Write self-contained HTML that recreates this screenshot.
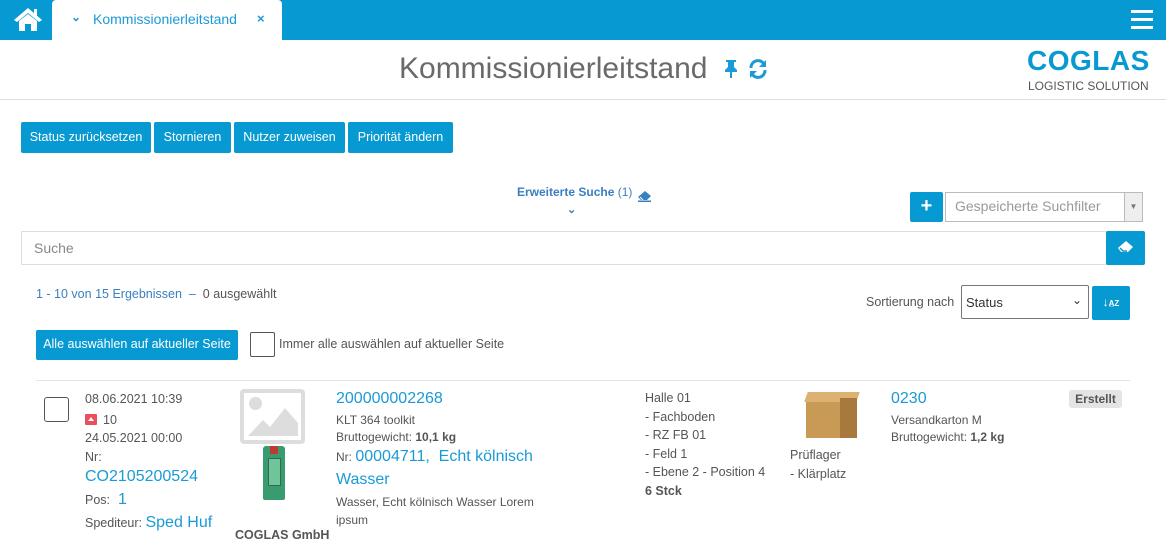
<!DOCTYPE html>
<html><head><meta charset="utf-8"><style>
*{box-sizing:border-box;margin:0;padding:0}
body{width:1166px;height:553px;overflow:hidden;background:#fff;font-family:"Liberation Sans",sans-serif;color:#555;position:relative}
.a{position:absolute}
.blue{color:#1a9ad6}
.btn{position:absolute;background:#079ad2;color:#fff;font-size:12.5px;border-radius:2px;text-align:center;line-height:30px;height:31px}
.t13{font-size:12.5px}
</style></head><body>
<div class="a" style="left:0;top:0;width:1166px;height:40px;background:#079ad2"></div>
<svg class="a" style="left:13px;top:6px" width="30" height="26" viewBox="0 0 30 26"><path d="M15 2 L1 14 L4 16 L15 7 L26 16 L29 14 Z" fill="#fff"/><path d="M6 15 L15 8 L24 15 V25 H18 V18 H12 V25 H6 Z" fill="#fff"/><rect x="21" y="3" width="3" height="7" fill="#fff"/></svg>
<div class="a" style="left:52px;top:0;width:230px;height:40px;background:#fff;border-radius:4px 4px 0 0"></div>
<div class="a blue" style="left:71px;top:10px;font-size:12px;font-weight:bold">&#8964;</div>
<div class="a blue" style="left:93px;top:11px;font-size:14px">Kommissionierleitstand</div>
<div class="a blue" style="left:257px;top:11px;font-size:13px;font-weight:bold">×</div>
<div class="a" style="left:1131px;top:10px;width:22px;height:3px;background:#fff;box-shadow:0 8px 0 #fff,0 16px 0 #fff"></div>
<div class="a" style="left:399px;top:52px;font-size:30px;color:#6a6a6a;font-weight:300">Kommissionierleitstand</div>
<svg class="a" style="left:723px;top:59px" width="16" height="20" viewBox="0 0 16 20"><path d="M3 1H13V3H11V8L14 11V13H9V19H7V13H2V11L5 8V3H3Z" fill="#1a9ad6"/></svg>
<svg class="a" style="left:748px;top:59px" width="20" height="20" viewBox="0 0 20 20"><path d="M3 9A7 7 0 0 1 16 5" stroke="#1a9ad6" stroke-width="3" fill="none"/><path d="M18 1V8H11Z" fill="#1a9ad6"/><path d="M17 11A7 7 0 0 1 4 15" stroke="#1a9ad6" stroke-width="3" fill="none"/><path d="M2 19V12H9Z" fill="#1a9ad6"/></svg>
<div class="a" style="left:1027px;top:45px;font-size:28px;font-weight:bold;color:#079ad2;letter-spacing:0.5px">COGLAS</div>
<div class="a" style="left:1028px;top:79px;font-size:12px;color:#555">LOGISTIC SOLUTION</div>
<div class="a" style="left:0;top:99px;width:1166px;height:1px;background:#ddd"></div>
<div class="btn" style="left:21px;top:122px;width:130px">Status zurücksetzen</div>
<div class="btn" style="left:154px;top:122px;width:77px">Stornieren</div>
<div class="btn" style="left:234px;top:122px;width:111px">Nutzer zuweisen</div>
<div class="btn" style="left:348px;top:122px;width:105px">Priorität ändern</div>
<div class="a" style="left:517px;top:185px;font-size:12px;font-weight:bold;color:#3a7fc0">Erweiterte Suche <span style="font-weight:normal">(1)</span></div>
<svg class="a" style="left:638px;top:191px" width="13" height="11" viewBox="0 0 13 11"><path d="M7 0L13 5L9 9H3L0 6Z" fill="#3a7fc0"/><path d="M2 6L5 9" stroke="#fff"/><rect x="0" y="9.5" width="13" height="1.5" fill="#3a7fc0"/></svg>
<div class="a" style="left:567px;top:203px;font-size:11px;color:#3a7fc0;font-weight:bold">&#8964;</div>
<div class="btn" style="left:910px;top:192px;width:33px;height:30px;font-size:20px;line-height:29px;font-weight:bold">+</div>
<div class="a" style="left:945px;top:192px;width:198px;height:30px;border:1px solid #bbb"></div>
<div class="a" style="left:1124px;top:193px;width:18px;height:28px;background:#eee;border-left:1px solid #bbb;font-size:8px;color:#777;text-align:center;line-height:28px">▼</div>
<div class="a" style="left:955px;top:198px;font-size:14px;color:#999">Gespeicherte Suchfilter</div>
<div class="a" style="left:21px;top:231px;width:1086px;height:34px;border:1px solid #ddd"></div>
<div class="a" style="left:34px;top:240px;font-size:14px;color:#888">Suche</div>
<div class="btn" style="left:1106px;top:231px;width:39px;height:34px"></div>
<svg class="a" style="left:1118px;top:241px" width="15" height="13" viewBox="0 0 15 13"><path d="M8 0L15 6L10 11H3L0 7Z" fill="#fff"/><path d="M2 7L5 10H9" stroke="#079ad2" stroke-width="1.5" fill="none"/></svg>
<div class="a" style="left:36px;top:287px;font-size:12.5px;color:#3a7fc0">1 - 10 von 15 Ergebnissen &nbsp;– &nbsp;<span style="color:#555">0 ausgewählt</span></div>
<div class="a" style="left:866px;top:295px;font-size:12.5px">Sortierung nach</div>
<div class="a" style="left:961px;top:285px;width:128px;height:34px;border:1px solid #777;border-radius:2px;font-size:13px;color:#333;padding:9px 0 0 4px">Status<span style="position:absolute;right:6px;top:7px;font-size:12px">&#8964;</span></div>
<div class="btn" style="left:1092px;top:286px;width:38px;height:34px;font-size:12px;font-weight:bold;line-height:33px">↓<span style="font-size:8px">A̲Z</span></div>
<div class="btn" style="left:36px;top:330px;width:202px;height:30px;line-height:29px">Alle auswählen auf aktueller Seite</div>
<div class="a" style="left:250px;top:332px;width:25px;height:25px;border:1px solid #555;border-radius:2px"></div>
<div class="a" style="left:279px;top:337px;font-size:12.5px">Immer alle auswählen auf aktueller Seite</div>
<div class="a" style="left:36px;top:380px;width:1094px;height:1px;background:#e5e5e5"></div>
<div class="a" style="left:44px;top:397px;width:25px;height:25px;border:1px solid #555;border-radius:3px"></div>
<div class="a t13" style="left:85px;top:390px;line-height:18px">08.06.2021 10:39</div>
<div class="a" style="left:85px;top:414px;width:12px;height:11px;background:#e8505b;border-radius:1px"></div>
<div class="a" style="left:88px;top:417px;width:0;height:0;border-left:3px solid transparent;border-right:3px solid transparent;border-bottom:4px solid #fff"></div>
<div class="a t13" style="left:103px;top:411px;line-height:18px">10</div>
<div class="a t13" style="left:85px;top:429px;line-height:18px">24.05.2021 00:00</div>
<div class="a t13" style="left:85px;top:448px;line-height:18px">Nr:</div>
<div class="a blue" style="left:85px;top:467px;font-size:16px;line-height:20px">CO2105200524</div>
<div class="a t13" style="left:85px;top:491px;line-height:18px">Pos: <span class="blue" style="font-size:16px">&nbsp;1</span></div>
<div class="a t13" style="left:85px;top:514px;line-height:18px">Spediteur: <span class="blue" style="font-size:16px">Sped Huf</span></div>
<div class="a" style="left:240px;top:389px;width:65px;height:55px;border:4px solid #ddd;border-radius:4px"></div>
<div class="a" style="left:249px;top:397px;width:13px;height:13px;border-radius:50%;background:#ddd"></div>
<svg class="a" style="left:248px;top:400px" width="50" height="36"><path d="M0 36L15 20L22 27L37 8L50 23V36Z" fill="#ddd"/></svg>
<div class="a" style="left:263px;top:446px;width:22px;height:54px;background:#3a9a70;border-radius:3px 3px 2px 2px"></div>
<div class="a" style="left:268px;top:458px;width:13px;height:28px;background:#6fc49a;border:1px solid #2d6e50"></div>
<div class="a" style="left:270px;top:446px;width:8px;height:8px;background:#c03a30"></div>
<div class="a" style="left:235px;top:528px;font-size:12.5px;font-weight:bold;color:#555">COGLAS GmbH</div>
<div class="a blue" style="left:336px;top:390px;font-size:16px">200000002268</div>
<div class="a" style="left:336px;top:413px;font-size:12px">KLT 364 toolkit</div>
<div class="a" style="left:336px;top:430px;font-size:12px">Bruttogewicht: <b>10,1 kg</b></div>
<div class="a" style="left:336px;top:448px;font-size:12px">Nr: <span class="blue" style="font-size:16px">00004711, &nbsp;Echt kölnisch</span></div>
<div class="a blue" style="left:336px;top:471px;font-size:16px">Wasser</div>
<div class="a" style="left:336px;top:493px;font-size:12px;line-height:18px;width:210px">Wasser, Echt kölnisch Wasser Lorem ipsum</div>
<div class="a t13" style="left:645px;top:389px;line-height:18.5px">Halle 01<br>- Fachboden<br>- RZ FB 01<br>- Feld 1<br>- Ebene 2 - Position 4<br><b>6 Stck</b></div>
<div class="a" style="left:806px;top:396px;width:46px;height:42px;background:#c89a55"></div>
<div class="a" style="left:806px;top:392px;width:52px;height:10px;background:#dcb273;transform:skewX(-20deg)"></div>
<div class="a" style="left:840px;top:398px;width:17px;height:40px;background:#a8793d"></div>
<div class="a t13" style="left:790px;top:446px;line-height:19px">Prüflager<br>- Klärplatz</div>
<div class="a blue" style="left:891px;top:390px;font-size:16px">0230</div>
<div class="a" style="left:891px;top:413px;font-size:12px">Versandkarton M</div>
<div class="a" style="left:891px;top:430px;font-size:12px">Bruttogewicht: <b>1,2 kg</b></div>
<div class="a" style="left:1069px;top:390px;width:53px;height:18px;background:#e4e4e4;border-radius:3px;font-size:12px;font-weight:bold;text-align:center;line-height:18px">Erstellt</div>
</body></html>
